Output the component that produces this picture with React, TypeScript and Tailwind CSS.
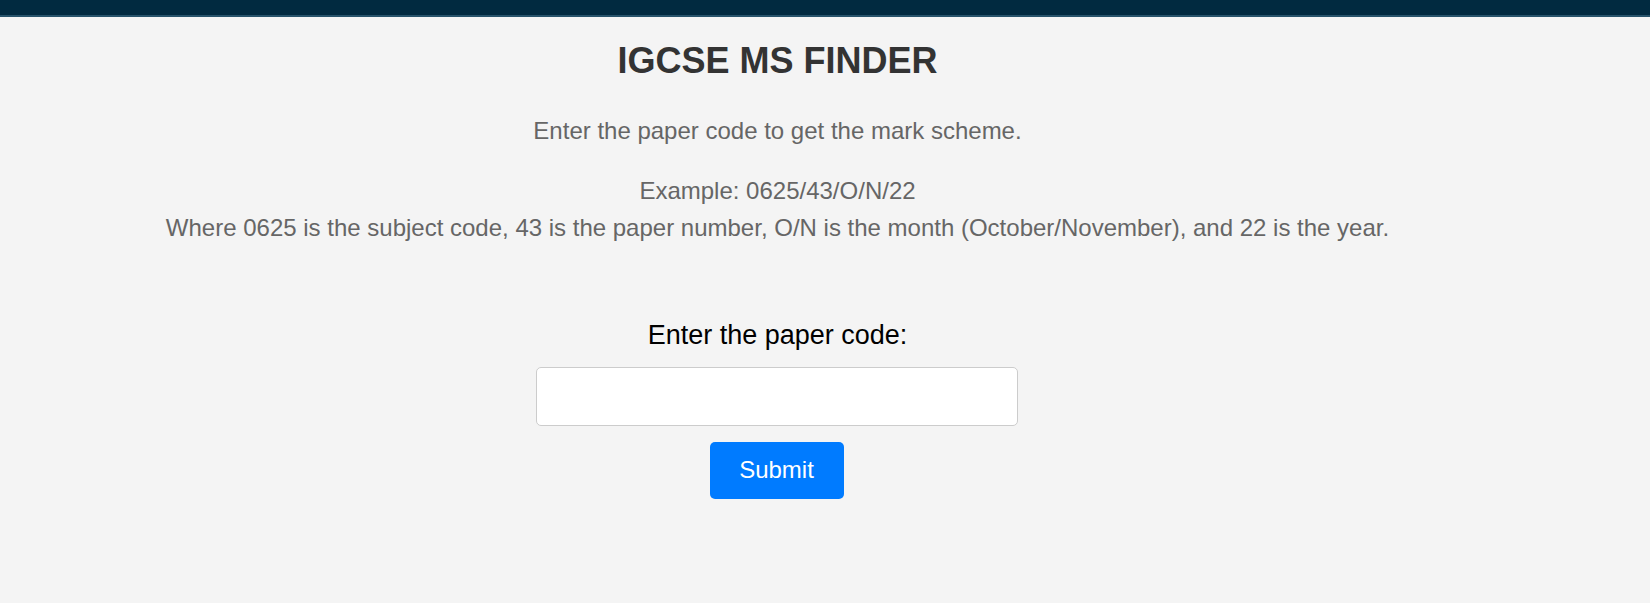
import React from "react";

export default function App() {
  return (
    <div
      className="min-h-[603px] w-full bg-[#f4f4f4]"
      style={{ fontFamily: '"Liberation Sans", Arial, sans-serif' }}
    >
      <div className="h-[17px] w-full bg-[#012a40] border-b-2 border-[#27536b]" />
      <div className="flex flex-col items-center pr-[95px]">
        <h1 className="mt-[26px] text-[36px] leading-none font-bold text-[#333333]">
          IGCSE MS FINDER
        </h1>
        <p className="mt-[40px] text-[24px] leading-none text-[#666666]">
          Enter the paper code to get the mark scheme.
        </p>
        <p className="mt-[28.5px] text-[24px] leading-[37px] text-[#666666] text-center">
          Example: 0625/43/O/N/22
          <br />
          Where 0625 is the subject code, 43 is the paper number, O/N is the month (October/November), and 22 is the year.
        </p>
        <label className="mt-[76px] text-[27px] leading-none text-black">
          Enter the paper code:
        </label>
        <input
          type="text"
          className="mt-[18px] mr-[2px] h-[59px] w-[482px] rounded-[5px] border border-[#cccccc] bg-white px-3 text-[24px] outline-none"
        />
        <button className="mt-[16px] mr-[2px] h-[57px] w-[134px] rounded-[5px] bg-[#007bff] text-[24px] text-white">
          Submit
        </button>
      </div>
    </div>
  );
}
